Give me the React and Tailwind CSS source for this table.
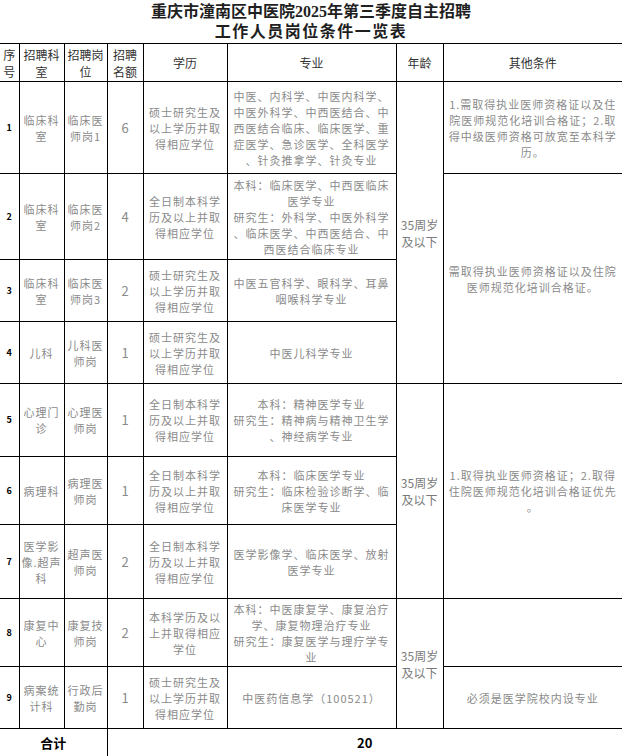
const rows = [
  {
    no: "1", h: "h-[92px]",
    dept: ["临床科", "室"], post: ["临床医", "师岗1"], num: "6",
    edu: ["硕士研究生及", "以上学历并取", "得相应学位"],
    major: ["中医、内科学、中医内科学、", "中医外科学、中西医结合、中", "西医结合临床、临床医学、重", "症医学、急诊医学、全科医学", "、针灸推拿学、针灸专业"],
    age: 4,
    other: { span: 1, lines: ["1.需取得执业医师资格证以及住", "院医师规范化培训合格证；2.取", "得中级医师资格可放宽至本科学", "历。"] },
  },
  {
    no: "2", h: "h-[86px]",
    dept: ["临床科", "室"], post: ["临床医", "师岗2"], num: "4",
    edu: ["全日制本科学", "历及以上并取", "得相应学位"],
    major: ["本科：临床医学、中西医临床", "医学专业", "研究生：外科学、中医外科学", "、临床医学、中西医结合、中", "西医结合临床专业"],
    other: { span: 3, lines: ["需取得执业医师资格证以及住院", "医师规范化培训合格证。"] },
  },
  {
    no: "3", h: "h-[62px]",
    dept: ["临床科", "室"], post: ["临床医", "师岗3"], num: "2",
    edu: ["硕士研究生及", "以上学历并取", "得相应学位"],
    major: ["中医五官科学、眼科学、耳鼻", "咽喉科学专业"],
  },
  {
    no: "4", h: "h-[62px]",
    dept: ["儿科"], post: ["儿科医", "师岗"], num: "1",
    edu: ["硕士研究生及", "以上学历并取", "得相应学位"],
    major: ["中医儿科学专业"],
  },
  {
    no: "5", h: "h-[73px]",
    dept: ["心理门", "诊"], post: ["心理医", "师岗"], num: "1",
    edu: ["全日制本科学", "历及以上并取", "得相应学位"],
    major: ["本科：精神医学专业", "研究生：精神病与精神卫生学", "、神经病学专业"],
    age: 3,
    other: { span: 3, lines: ["1.取得执业医师资格证；2.取得", "住院医师规范化培训合格证优先", "。"] },
  },
  {
    no: "6", h: "h-[68px]",
    dept: ["病理科"], post: ["病理医", "师岗"], num: "1",
    edu: ["全日制本科学", "历及以上并取", "得相应学位"],
    major: ["本科：临床医学专业", "研究生：临床检验诊断学、临", "床医学专业"],
  },
  {
    no: "7", h: "h-[74px]",
    dept: ["医学影", "像.超声", "科"], post: ["超声医", "师岗"], num: "2",
    edu: ["全日制本科学", "历及以上并取", "得相应学位"],
    major: ["医学影像学、临床医学、放射", "医学专业"],
  },
  {
    no: "8", h: "h-[68px]",
    dept: ["康复中", "心"], post: ["康复技", "师岗"], num: "2",
    edu: ["本科学历及以", "上并取得相应", "学位"],
    major: ["本科：中医康复学、康复治疗", "学、康复物理治疗专业", "研究生：康复医学与理疗学专", "业"],
    age: 2,
    other: { span: 1, lines: [] },
  },
  {
    no: "9", h: "h-[62px]",
    dept: ["病案统", "计科"], post: ["行政后", "勤岗"], num: "1",
    edu: ["硕士研究生及", "以上学历并取", "得相应学位"],
    major: ["中医药信息学（100521）"],
    other: { span: 1, lines: ["必须是医学院校内设专业"] },
  },
]

const Lines = ({ lines }) => lines.map((l, i) => <div key={i}>{l}</div>)

const cell = "border border-black p-0 text-center align-middle"
const body = "text-[11px] leading-[16px] tracking-[1px] text-[#8a8a8a]"

export default function App() {
  return (
    <div className="w-[622px] bg-white font-['Noto_Sans_CJK_SC',sans-serif]">
      <div className="h-[43px] pt-[2px] text-center font-bold text-[16px] leading-[20px] text-[#1f1f1f] font-['Liberation_Serif','Noto_Sans_CJK_SC',serif]">
        <div>重庆市潼南区中医院2025年第三季度自主招聘</div>
        <div className="tracking-[1.5px]">工作人员岗位条件一览表</div>
      </div>

      <table className="w-[622px] table-fixed border-collapse">
        <colgroup>
          <col className="w-[19px]" />
          <col className="w-[45px]" />
          <col className="w-[43px]" />
          <col className="w-[36px]" />
          <col className="w-[84px]" />
          <col className="w-[169px]" />
          <col className="w-[47px]" />
          <col className="w-[179px]" />
        </colgroup>
        <thead>
          <tr className="h-[38px] text-[12px] leading-[17px] text-[#333]">
            <th className={`${cell} border-l-0 font-normal`}>序<br />号</th>
            <th className={`${cell} font-normal`}>招聘科<br />室</th>
            <th className={`${cell} font-normal`}>招聘岗<br />位</th>
            <th className={`${cell} font-normal`}>招聘<br />名额</th>
            <th className={`${cell} font-normal`}>学历</th>
            <th className={`${cell} font-normal`}>专业</th>
            <th className={`${cell} font-normal`}>年龄</th>
            <th className={`${cell} border-r-0 font-normal`}>其他条件</th>
          </tr>
        </thead>
        <tbody>
          {rows.map((r) => (
            <tr key={r.no} className={r.h}>
              <td className={`${cell} border-l-0 text-[9px] font-bold text-black`}>{r.no}</td>
              <td className={`${cell} ${body}`}><Lines lines={r.dept} /></td>
              <td className={`${cell} ${body}`}><Lines lines={r.post} /></td>
              <td className={`${cell} text-[13px] text-[#8a8a8a]`}>{r.num}</td>
              <td className={`${cell} ${body}`}><Lines lines={r.edu} /></td>
              <td className={`${cell} ${body} px-[5px]`}><Lines lines={r.major} /></td>
              {r.age && (
                <td rowSpan={r.age} className={`${cell} text-[12px] leading-[17px] text-[#7a7a7a]`}>
                  35周岁<br />及以下
                </td>
              )}
              {r.other && (
                <td rowSpan={r.other.span} className={`${cell} ${body} border-r-0`}>
                  <Lines lines={r.other.lines} />
                </td>
              )}
            </tr>
          ))}
          <tr className="h-[28px] text-[13px] font-bold text-black">
            <td colSpan={3} className={`${cell} border-l-0 border-b-0`}>合计</td>
            <td colSpan={5} className={`${cell} border-r-0 border-b-0`}>20</td>
          </tr>
        </tbody>
      </table>
    </div>
  )
}
